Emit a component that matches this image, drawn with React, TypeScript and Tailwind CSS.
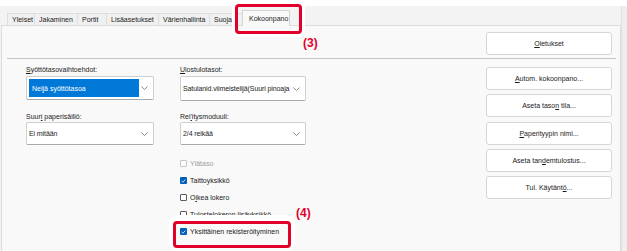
import type { ReactNode } from 'react';

const TABS = [
  { label: 'Yleiset', w: 'w-[27px]' },
  { label: 'Jakaminen', w: 'w-[43px]' },
  { label: 'Portit', w: 'w-[29px]' },
  { label: 'Lisäasetukset', w: 'w-[52px]' },
  { label: 'Värienhallinta', w: 'w-[51px]' },
  { label: 'Suoja', w: 'w-[33px]' },
];

const Chevron = () => (
  <svg width="7" height="4" viewBox="0 0 7 4" className="shrink-0">
    <polyline points="0.5,0.5 3.5,3.5 6.5,0.5" fill="none" stroke="#707070" strokeWidth="0.8" />
  </svg>
);

const Select = ({ children, selected, h }: { children: ReactNode; selected?: boolean; h: string }) => (
  <div
    className={`${h} w-full flex items-center bg-white border border-[#cfcfcf] border-b-[#a8a8a8] rounded-[2px] pr-[5px]`}
  >
    {selected ? (
      <div className="ml-[2px] h-[calc(100%-4px)] w-[110px] bg-[#0078d7] text-white flex items-center pl-[3px]">
        {children}
      </div>
    ) : (
      <div className="pl-[2px] flex-1 overflow-hidden whitespace-nowrap tracking-[-0.1px]">{children}</div>
    )}
    <div className="ml-auto pl-[2px]">
      <Chevron />
    </div>
  </div>
);

const Check = ({ label, checked, disabled }: { label: ReactNode; checked?: boolean; disabled?: boolean }) => (
  <div className="h-[17px] flex items-center">
    {checked ? (
      <div className="w-[7px] h-[7px] rounded-[1px] bg-[#005fb8] flex items-center justify-center">
        <svg width="5" height="4" viewBox="0 0 5 4">
          <polyline points="0.6,2 1.9,3.2 4.4,0.6" fill="none" stroke="white" strokeWidth="0.8" />
        </svg>
      </div>
    ) : (
      <div
        className={`w-[7px] h-[7px] rounded-[1px] border ${disabled ? 'border-[#c4c4c4]' : 'border-[#5c5c5c]'} bg-white`}
      />
    )}
    <span className={`ml-[3px] ${disabled ? 'text-[#a0a0a0]' : ''}`}>{label}</span>
  </div>
);

const Btn = ({ children }: { children: ReactNode }) => (
  <div className="h-[23px] w-full bg-white border border-[#d6d6d6] rounded-[3px] flex items-center justify-center">
    {children}
  </div>
);

const App = () => {
  return (
    <div
      className="w-[627px] h-[251px] bg-white relative overflow-hidden text-[7px] leading-[9px] text-[#1b1b1b]"
      style={{ fontFamily: '"Liberation Sans", Arial, sans-serif' }}
    >
      <div className="mt-[6px] h-[245px] bg-[#f3f3f3] flex">
        <div className="w-[1px]" />
        <div className="w-[620px] flex flex-col">
          {/* tabs */}
          <div className="h-[19px] flex items-end pl-[6px]">
            {TABS.map((t) => (
              <div
                key={t.label}
                className={`${t.w} h-[12px] border-t border-l border-[#dedede] bg-[#f0f0f0] pl-[4px] flex items-center`}
              >
                {t.label}
              </div>
            ))}
            <div className="w-[48px] h-[16px] mb-[-1px] border border-b-0 border-[#d4d4d4] bg-[#f9f9f9] pl-[6px] flex items-center relative z-10">
              Kokoonpano
            </div>
          </div>

          {/* panel */}
          <div className="flex-1 bg-[#f9f9f9] border border-[#dcdcdc] border-b-0 flex flex-col">
            <div className="pt-[6px] pr-[8px] flex justify-end">
              <div className="w-[126px]">
                <Btn>
                  <span>
                    <u>O</u>letukset
                  </span>
                </Btn>
              </div>
            </div>
            <div className="mt-[3px] ml-[5px] mr-[4px] h-[1px] bg-[#c4c4c4]" />

            <div className="flex pl-[24px] pr-[8px]">
              {/* left column */}
              <div className="w-[128px] pt-[6px] flex flex-col">
                <div>
                  <u>S</u>yöttötasovaihtoehdot:
                </div>
                <div className="mt-[2px]">
                  <Select h="h-[24px]" selected>
                    Neljä syöttötasoa
                  </Select>
                </div>
                <div className="mt-[12px]">
                  Suur<u>i</u> paperisäiliö:
                </div>
                <div className="mt-[1px]">
                  <Select h="h-[23px]">Ei mitään</Select>
                </div>
              </div>

              {/* middle column */}
              <div className="w-[126px] ml-[26px] pt-[6px] flex flex-col">
                <div>
                  <u>U</u>lostulotasot:
                </div>
                <div className="mt-[2px]">
                  <Select h="h-[25px]">Satulanid.viimeistelijä(Suuri pinoaja</Select>
                </div>
                <div className="mt-[11px]">
                  Rei<u>'</u>itysmoduuli:
                </div>
                <div className="mt-[1px]">
                  <Select h="h-[23px]">2/4 reikää</Select>
                </div>
                <div className="mt-[10px] flex flex-col">
                  <Check label="Ylätaso" disabled />
                  <Check label="Taittoyksikkö" checked />
                  <Check
                    label={
                      <>
                        O<u>i</u>kea lokero
                      </>
                    }
                  />
                  <Check label="Tulostelokeron lisäyksikkö" />
                  <Check label="Yksittäinen rekisteröityminen" checked />
                </div>
              </div>

              {/* right buttons */}
              <div className="ml-auto w-[126px] pt-[8px] flex flex-col gap-[4.25px]">
                <Btn>
                  <span>
                    <u>A</u>utom. kokoonpano...
                  </span>
                </Btn>
                <Btn>
                  <span>
                    Aseta taso<u>n</u> tila...
                  </span>
                </Btn>
                <Btn>
                  <span>
                    <u>P</u>aperityypin nimi...
                  </span>
                </Btn>
                <Btn>
                  <span>
                    Aseta tan<u>d</u>emtulostus...
                  </span>
                </Btn>
                <Btn>
                  <span>
                    Tul. Käytänt<u>ö</u>...
                  </span>
                </Btn>
              </div>
            </div>
          </div>
        </div>
        <div className="flex-1 bg-[#eeeeee] border-l border-[#e2e2e2]" />
      </div>

      {/* callouts */}
      <div className="absolute left-[235px] top-[4px] w-[67px] h-[30px] border-[3px] border-[#e2002b] rounded-[4px] shadow-[0_0_0_3px_white]" />
      <div className="absolute left-[303px] top-[37px] text-[12px] leading-[13px] font-bold text-[#e2002b]">(3)</div>
      <div className="absolute left-[296px] top-[207px] text-[12px] leading-[13px] font-bold text-[#e2002b]">(4)</div>
      <div className="absolute left-[173px] top-[221px] w-[118px] h-[27px] border-[3px] border-[#e2002b] rounded-[4px] shadow-[0_-2px_0_4px_white]" />
    </div>
  );
};

export default App;
